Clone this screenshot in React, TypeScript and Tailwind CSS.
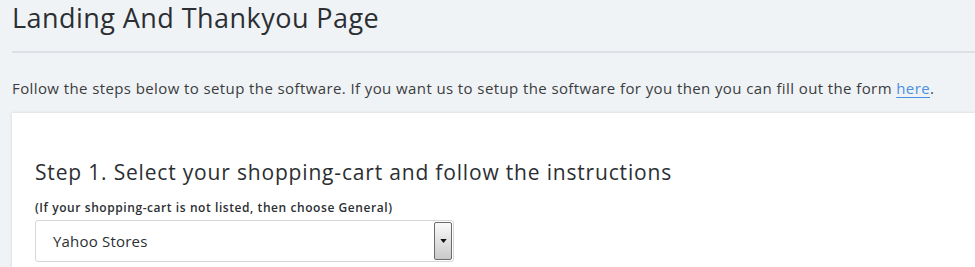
export default function App() {
  return (
    <div
      className="w-[975px] h-[267px] overflow-hidden bg-[#f0f3f6] text-[#333] pl-3"
      style={{ fontFamily: '"Open Sans", "Liberation Sans", sans-serif' }}
    >
      {/* page header */}
      <h1 className="pt-[1px] text-[27px] leading-[34px] font-normal tracking-[0.45px] text-[#2b2f33]">
        Landing And Thankyou Page
      </h1>
      <hr className="mt-[16px] border-0 border-t-2 border-[#dcdfe3]" />

      <p className="mt-[25px] text-[15px] leading-[20px] tracking-[0.4px] text-[#3a3d40]">
        Follow the steps below to setup the software. If you want us to setup the software for you then
        you can fill out the form{" "}
        <a href="#" className="text-[#4a90e2] underline decoration-1 underline-offset-[3px]">
          here
        </a>
        .
      </p>

      {/* step card */}
      <div className="mt-[15px] h-[200px] bg-white pl-[23px] pt-[45px] shadow-[0_0_3px_rgba(0,0,0,0.12)]">
        <h2 className="text-[21px] leading-[28px] font-normal tracking-[0.82px] text-[#2b2f33]">
          Step 1. Select your shopping-cart and follow the instructions
        </h2>
        <p className="mt-[15px] text-[12px] leading-[14px] font-semibold tracking-[0.57px] text-[#2b2f33]">
          (If your shopping-cart is not listed, then choose General)
        </p>
        <div className="mt-[5px] flex h-[42px] w-[419px] items-stretch rounded-[3px] border border-[#d4d7da] bg-white p-[1px]">
          <div className="flex flex-1 items-center pl-[16px] text-[15px] tracking-[0.2px] text-[#2b2f33]">
            Yahoo Stores
          </div>
          <div className="flex w-[18px] items-center justify-center rounded-[2px] border border-[#6b6b6b] bg-gradient-to-b from-[#fafafa] to-[#c9c9c9]">
            <svg viewBox="0 0 8 5" className="h-[4px] w-[7px]">
              <path d="M0 0h8L4 5z" fill="#111" />
            </svg>
          </div>
        </div>
      </div>
    </div>
  );
}
